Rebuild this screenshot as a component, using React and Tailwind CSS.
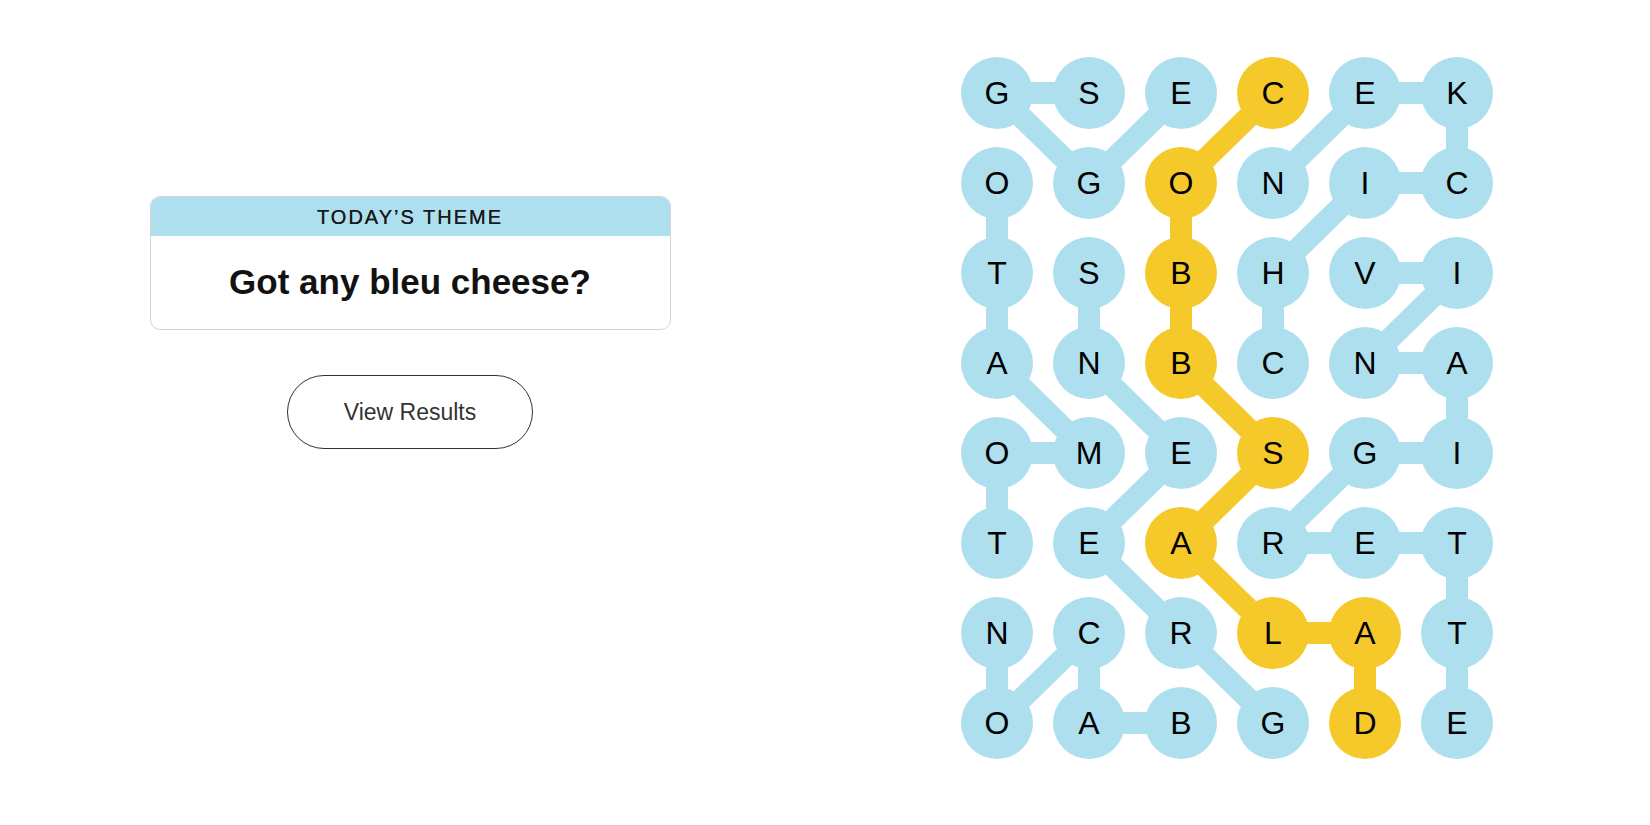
import React from "react";

const grid = [
  "GSECEK",
  "OGONIC",
  "TSBHVI",
  "ANBCNA",
  "OMESGI",
  "TEARET",
  "NCRLAT",
  "OABGDE",
];

// spangram cells
const yellow = ["0,3", "1,2", "2,2", "3,2", "4,3", "5,2", "6,3", "6,4", "7,4"];

// each word as a path of [row, col]
const blueWords = [
  [[0, 2], [1, 1], [0, 0], [0, 1]], // EGGS
  [[3, 3], [2, 3], [1, 4], [1, 5], [0, 5], [0, 4], [1, 3]], // CHICKEN
  [[5, 0], [4, 0], [4, 1], [3, 0], [2, 0], [1, 0]], // TOMATO
  [[7, 3], [6, 2], [5, 1], [4, 2], [3, 1], [2, 1]], // GREENS
  [[7, 2], [7, 1], [6, 1], [7, 0], [6, 0]], // BACON
  [[2, 4], [2, 5], [3, 4], [3, 5], [4, 5], [4, 4], [5, 3], [5, 4], [5, 5], [6, 5], [7, 5]], // VINAIGRETTE
];
const yellowWord = [[0, 3], [1, 2], [2, 2], [3, 2], [4, 3], [5, 2], [6, 3], [6, 4], [7, 4]];

const cx = (c) => 36 + c * 92;
const cy = (r) => 36 + r * 90;

const Word = ({ path, color }) => (
  <polyline
    points={path.map(([r, c]) => `${cx(c)},${cy(r)}`).join(" ")}
    fill="none"
    stroke={color}
    strokeWidth="22"
    strokeLinejoin="round"
  />
);

const Board = () => (
  <div className="relative w-[532px] h-[702px]">
    <svg className="absolute inset-0" width="532" height="702">
      {blueWords.map((w, i) => (
        <Word key={i} path={w} color="#aedfee" />
      ))}
      <Word path={yellowWord} color="#f6c92b" />
    </svg>
    <div className="relative grid grid-cols-6 gap-x-5 gap-y-[18px]">
      {grid.map((row, r) =>
        row.split("").map((ch, c) => (
          <div
            key={`${r}-${c}`}
            className={`w-[72px] h-[72px] rounded-full flex items-center justify-center text-[32px] text-black ${
              yellow.includes(`${r},${c}`) ? "bg-[#f6c92b]" : "bg-[#aedfee]"
            }`}
          >
            {ch}
          </div>
        ))
      )}
    </div>
  </div>
);

export default function App() {
  return (
    <div className="w-full h-[825px] bg-white flex font-['Liberation_Sans',Arial,sans-serif] text-[#121212]">
      <div className="w-[820px] flex flex-col items-center pt-[196px]">
        <div className="w-[521px] border border-[#d4d4d4] rounded-[10px] overflow-hidden">
          <div className="h-[39px] bg-[#aedfee] flex items-center justify-center text-[20px] tracking-[2px] uppercase text-[#1a1a1a] [text-shadow:0_0_0.4px_#1a1a1a]">
            Today’s Theme
          </div>
          <div className="h-[93px] flex items-center justify-center text-[35px] font-bold">
            Got any bleu cheese?
          </div>
        </div>
        <button className="mt-[45px] w-[246px] h-[74px] rounded-full border border-[#333] text-[23px] text-[#333] bg-white">
          View Results
        </button>
      </div>
      <div className="ml-[141px] pt-[57px]">
        <Board />
      </div>
    </div>
  );
}
